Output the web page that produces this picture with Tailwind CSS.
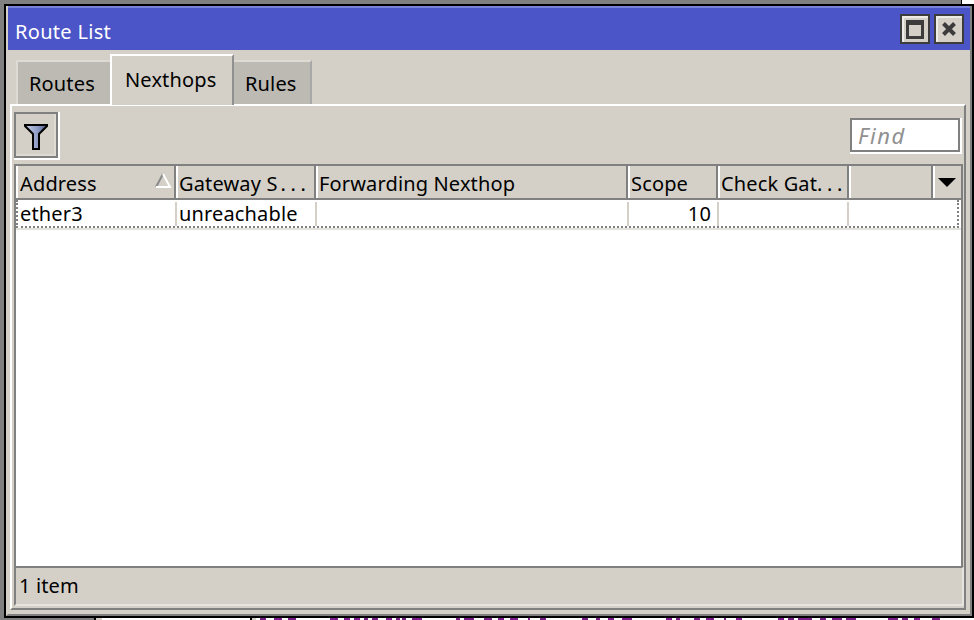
<!DOCTYPE html>
<html>
<head>
  <meta charset="UTF-8">
  <meta name="viewport" content="width=device-width, initial-scale=1.0">
  <script src="https://cdn.jsdelivr.net/npm/@tailwindcss/browser@4"></script>
</head>
<body>
<div class="relative h-[620px] w-[974px] overflow-hidden bg-white font-['Noto_Sans',sans-serif] text-[20px] leading-none tracking-[0.15px] text-black">
  <!-- desktop behind the window -->
  <div class="absolute left-0 top-0 h-[4px] w-[961px] bg-[#808080]"></div>
  <div class="absolute left-[961px] top-0 h-[4px] w-[1px] bg-black"></div>
  <div class="absolute left-0 top-0 h-full w-[4px] bg-[#808080]"></div>
  <div class="absolute bottom-0 left-0 h-[2px] w-[94px] bg-[#808080]"></div>
  <div class="absolute bottom-0 left-[94px] h-[2px] w-[2px] bg-black"></div>
  <div class="absolute bottom-0 left-[96px] h-[2px] w-[6px] bg-[#d4d0c8]"></div>
  <div class="absolute bottom-0 left-[250px] h-[2px] w-[2px] bg-black"></div>
  <div class="absolute bottom-0 left-[252px] h-[2px] w-[4px] bg-[#d4d0c8]"></div>
  <svg class="absolute bottom-0 left-0" width="974" height="2" viewBox="0 0 974 2">
    <path fill="#7a1f8a" d="M260 0h6v2h-6zM274 0h8v2h-8zM288 0h8v2h-8zM330 0h8v2h-8zM344 0h6v2h-6zM354 0h6v2h-6zM364 0h4v2h-4zM372 0h6v2h-6zM386 0h6v2h-6zM396 0h4v2h-4zM402 0h4v2h-4zM412 0h10v2h-10zM456 0h4v2h-4zM464 0h10v2h-10zM484 0h8v2h-8zM498 0h6v2h-6zM510 0h8v2h-8zM528 0h2v2h-2zM540 0h6v2h-6zM582 0h6v2h-6zM596 0h4v2h-4zM608 0h6v2h-6zM622 0h10v2h-10zM666 0h6v2h-6zM676 0h4v2h-4zM694 0h6v2h-6zM706 0h8v2h-8zM724 0h2v2h-2zM736 0h6v2h-6zM778 0h6v2h-6zM788 0h6v2h-6zM798 0h14v2h-14zM820 0h6v2h-6zM832 0h10v2h-10zM846 0h10v2h-10zM888 0h10v2h-10zM902 0h6v2h-6zM914 0h6v2h-6zM932 0h8v2h-8z"/>
  </svg>

  <!-- window -->
  <div class="absolute left-[4px] top-[4px] h-[614px] w-[970px] border-2 border-black">
    <div class="flex h-full flex-col border-b-2 border-l-2 border-r-2 border-b-[#808080] border-l-[#d4d0c8] border-r-[#808080] bg-[#d4d0c8]">
      <div class="flex h-[44px] shrink-0 items-center justify-between border-t-2 border-[#7a82d8] bg-[#4b55c8] pl-[7px] pr-[6px] text-white">
        <span class="pt-[6px] tracking-[0.3px]">Route List</span>
        <div class="flex gap-[4px]">
          <div class="flex h-[30px] w-[30px] items-center justify-center border-2 border-[#3c3c3c] bg-[#d4d0c8] shadow-[inset_2px_2px_0_#eeece6]">
            <div class="h-[19px] w-[18px] border-[3px] border-t-[5px] border-[#3c3c3c]"></div>
          </div>
          <div class="flex h-[30px] w-[30px] items-center justify-center border-2 border-[#3c3c3c] bg-[#d4d0c8] shadow-[inset_2px_2px_0_#eeece6]">
            <svg width="14" height="14" viewBox="0 0 14 14"><path d="M1.5 1.5 L12.5 12.5 M12.5 1.5 L1.5 12.5" stroke="#3c3c3c" stroke-width="4"/></svg>
          </div>
        </div>
      </div>

      <!-- tabs -->
      <div class="flex h-[54px] shrink-0 items-end pl-[8px]">
        <div class="flex h-[44px] w-[94px] items-center border-l-2 border-t-2 border-[#dedbd5] bg-[#bdbab3] pl-[11px] pt-[2px]">Routes</div>
        <div class="z-10 -mb-[1px] h-[51px] w-[124px] border-l-2 border-r-2 border-t-2 border-l-white border-r-[#909090] border-t-white bg-[#d4d0c8] pl-[13px] pt-[14px]">Nexthops</div>
        <div class="flex h-[44px] w-[78px] items-center border-r-2 border-t-2 border-r-[#a8a8a8] border-t-[#dedbd5] bg-[#bdbab3] pl-[11px] pt-[2px]">Rules</div>
      </div>

      <!-- pane -->
      <div class="mb-[4px] ml-[2px] mr-[4px] flex min-h-0 flex-1 flex-col border-2 border-b-[#808080] border-l-white border-r-[#808080] border-t-white pl-[2px]">
        <div class="flex h-[58px] shrink-0 items-start justify-between pr-[2px] pt-[6px]">
          <div class="h-[48px] w-[46px] border-b-2 border-r-2 border-white">
            <div class="flex h-[46px] w-[44px] items-center justify-center border-2 border-[#808080] pt-[4px] shadow-[inset_-2px_-2px_0_#dedbd5]">
              <svg width="24" height="26" viewBox="0 0 24 26">
                <defs>
                  <linearGradient id="funnel" x1="0" x2="1" y1="0" y2="0">
                    <stop offset="0" stop-color="#c9d0e6"/>
                    <stop offset="0.55" stop-color="#8f9cc6"/>
                    <stop offset="1" stop-color="#56628f"/>
                  </linearGradient>
                </defs>
                <path d="M1 1 H23 V2 L15 10 V25 H9 V10 L1 2 Z" fill="url(#funnel)" stroke="#000" stroke-width="2"/>
              </svg>
            </div>
          </div>
          <div class="mt-[6px] h-[36px] w-[112px] border-b-2 border-r-2 border-white">
            <div class="flex h-[34px] w-[110px] items-center border-2 border-[#808080] bg-white pl-[6px] text-[22px] italic tracking-[1.5px] text-[#909090]">Find</div>
          </div>
        </div>

        <!-- table -->
        <div class="mr-[1px] flex min-h-0 flex-1 flex-col border-2 border-b-0 border-[#808080] bg-white">
          <div class="flex h-[34px] shrink-0 border-b-2 border-[#808080] bg-[#d4d0c8]">
            <div class="relative flex w-[160px] items-center border-l-2 border-r-2 border-l-white border-r-[#808080] pl-[2px] pt-[3px]">Address
              <svg class="absolute left-[136px] top-[7px]" width="18" height="15" viewBox="0 0 18 15">
                <path d="M9 1 L2 14" stroke="#8a8a8a" stroke-width="2" fill="none"/>
                <path d="M9 1 L16 14 H2" stroke="#fff" stroke-width="2" fill="none"/>
              </svg>
            </div>
            <div class="flex w-[140px] items-center border-l-2 border-r-2 border-l-white border-r-[#808080] pl-[1px] pt-[3px]">Gateway S<span class="ml-[3px] tracking-[4.6px]">...</span></div>
            <div class="flex w-[312px] items-center border-l-2 border-r-2 border-l-white border-r-[#808080] pl-[1px] pt-[3px]">Forwarding Nexthop</div>
            <div class="flex w-[90px] items-center border-l-2 border-r-2 border-l-white border-r-[#808080] pl-[1px] pt-[3px]">Scope</div>
            <div class="flex w-[131px] items-center border-l-2 border-r-2 border-l-white border-r-[#808080] pl-[1px] pt-[3px]">Check Gat<span class="tracking-[4.6px]">...</span></div>
            <div class="w-[84px] border-l-2 border-r-2 border-l-white border-r-[#808080]"></div>
            <div class="flex flex-1 items-center justify-center border-l-2 border-white pr-[2px]">
              <svg width="18" height="12" viewBox="0 0 18 12"><path d="M0 2 H18 L9 11 Z" fill="#000"/></svg>
            </div>
          </div>
          <div class="mr-[2px] flex h-[28px] shrink-0 border-b-2 border-l-2 border-r-2 border-dotted border-[#808080] pt-[2px]">
            <div class="flex w-[157px] items-center pl-[2px]">ether3</div>
            <div class="flex w-[140px] items-center border-l-2 border-[#d4d0c8] pl-[2px]">unreachable</div>
            <div class="w-[312px] border-l-2 border-[#d4d0c8]"></div>
            <div class="flex w-[90px] items-center justify-end border-l-2 border-[#d4d0c8] pr-[6px]">10</div>
            <div class="w-[130px] border-l-2 border-[#d4d0c8]"></div>
            <div class="flex-1 border-l-2 border-[#d4d0c8]"></div>
          </div>
          <div class="h-[2px] shrink-0 bg-[#e4e2dc]"></div>
          <div class="flex-1 bg-white"></div>
        </div>

        <!-- status -->
        <div class="mb-[2px] flex h-[40px] shrink-0 items-center border-b-2 border-l-2 border-r-2 border-t-2 border-b-[#e6e4de] border-l-[#808080] border-r-[#e6e4de] border-t-[#808080] pl-[3px]">1 item</div>
      </div>
    </div>
  </div>
</div>
</body>
</html>
